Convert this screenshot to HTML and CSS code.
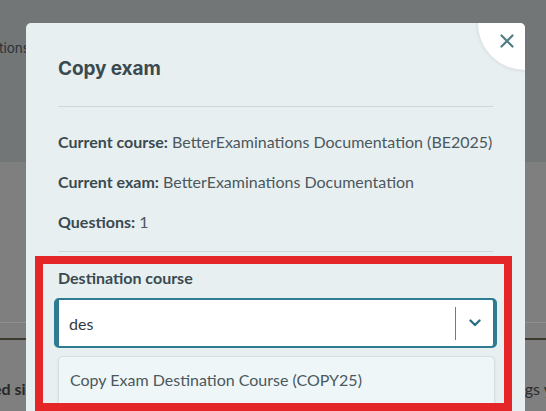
FILE: index.html
```html
<!DOCTYPE html>
<html lang="en">
<head>
<meta charset="utf-8">
<title>Copy exam</title>
<link rel="stylesheet" href="styles.css">
</head>
<body>
<div class="page">
  <div class="band-top"><span class="bg-text">tions</span></div>
  <div class="band-mid"></div>
  <div class="band-low">
    <div class="rule-light"></div>
    <div class="rule-dark"></div>
    <div class="bg-row"><span class="bg-bold">ed si</span><span class="bg-right">gs y</span></div>
  </div>

  <div class="modal">
    <button class="close" aria-label="Close">
      <svg viewBox="0 0 14 14" width="14" height="14"><path d="M1.5 1.5 L12.5 12.5 M12.5 1.5 L1.5 12.5" stroke="#4f7b82" stroke-width="2.2" stroke-linecap="round" fill="none"/></svg>
    </button>
    <h2 class="title">Copy exam</h2>
    <hr class="divider">
    <div class="info">
      <p><b>Current course:</b> BetterExaminations Documentation (BE2025)</p>
      <p><b>Current exam:</b> BetterExaminations Documentation</p>
      <p><b>Questions:</b> 1</p>
    </div>
    <hr class="divider second">
    <div class="field">
      <label class="label">Destination course</label>
      <div class="select">
        <span class="value">des</span>
        <span class="sep"></span>
        <span class="chev"><svg viewBox="0 0 12 8" width="12" height="8"><path d="M1.5 1.5 L6 6 L10.5 1.5" stroke="#2f7088" stroke-width="2.4" stroke-linecap="round" stroke-linejoin="round" fill="none"/></svg></span>
      </div>
      <div class="menu"><div class="option">Copy Exam Destination Course (COPY25)</div></div>
    </div>
  </div>

  <div class="highlight"></div>
</div>
</body>
</html>
```

FILE: styles.css
```css
* { box-sizing: border-box; }
html, body { margin: 0; padding: 0; }
body {
  width: 546px;
  height: 411px;
  overflow: hidden;
  background: #7f7f7f;
  font-family: "Lato", "Liberation Sans", sans-serif;
}
.page {
  position: relative;
  width: 546px;
  height: 411px;
  overflow: hidden;
}
.band-top {
  height: 162px;
  background: #737677;
  padding-top: 38px;
}
.bg-text {
  display: block;
  margin-left: -1px;
  font-family: "Inter", "Open Sans", sans-serif;
  font-size: 13.5px;
  line-height: 20px;
  color: #2b3235;
}
.band-mid {
  height: 160px;
  background: #7f7f7f;
}
.band-low {
  height: 89px;
  background: #7f7f7f;
}
.rule-light {
  height: 1px;
  background: #8f8f8f;
}
.rule-dark {
  height: 2px;
  margin-top: 15px;
  background: #3c392f;
}
.bg-row {
  display: flex;
  justify-content: space-between;
  margin-top: 40px;
  font-size: 16px;
  line-height: 18px;
  color: #272727;
}
.bg-bold { font-weight: 700; margin-left: -7px; }
.bg-right { margin-right: -6px; color: #2c2c2c; }

.modal {
  position: absolute;
  left: 26px;
  top: 23px;
  width: 499px;
  height: 420px;
  background: #e8eff1;
  border-radius: 5px;
  overflow: hidden;
  padding: 32px 32px 0 32px;
}
.close {
  position: absolute;
  top: -47px;
  right: -47px;
  width: 94px;
  height: 94px;
  border: none;
  border-radius: 50%;
  background: #ffffff;
  box-shadow: 0 0 4px rgba(0, 0, 0, 0.12);
  padding: 0;
  cursor: pointer;
}
.close svg {
  position: absolute;
  left: 22px;
  top: 58px;
}
.title {
  margin: 0;
  font-family: "Inter", "Open Sans", sans-serif;
  font-weight: 700;
  font-size: 19px;
  line-height: 28px;
  color: #3a4a50;
  letter-spacing: -0.1px;
}
.divider {
  margin: 23px 0 0 0;
  border: none;
  height: 1px;
  background: #cfd7da;
}
.info {
  margin-top: 15px;
}
.info p {
  margin: 0;
  font-size: 16px;
  line-height: 40px;
  color: #4b585d;
}
.info b {
  color: #3a4a50;
}
.divider.second {
  margin-top: 9px;
}
.field {
  margin-top: 16px;
}
.label {
  display: block;
  font-size: 16px;
  font-weight: 700;
  line-height: 20px;
  color: #3a4a50;
}
.select {
  display: flex;
  align-items: center;
  margin: 10px -4px 0 -4px;
  height: 50px;
  background: #ffffff;
  border: 2px solid #2f7b92;
  border-left-width: 5px;
  border-right-width: 4px;
  border-radius: 5px;
}
.value {
  flex: 1;
  padding-left: 10px;
  font-size: 16px;
  color: #333b3e;
}
.sep {
  width: 1px;
  height: 33px;
  background: #60828c;
}
.chev {
  display: flex;
  align-items: center;
  justify-content: center;
  width: 37px;
  height: 100%;
}
.menu {
  margin: 8px -2px 0 0;
  background: #eef6f8;
  border: 1px solid #d6e0e3;
  border-radius: 5px;
  box-shadow: 0 1px 3px rgba(0, 0, 0, 0.08);
  height: 60px;
}
.option {
  padding: 13px 11px;
  font-size: 16px;
  line-height: 20px;
  color: #4b585d;
}
.highlight {
  position: absolute;
  left: 35px;
  top: 256px;
  width: 477px;
  height: 155px;
  border: 8px solid #e42629;
}
```
